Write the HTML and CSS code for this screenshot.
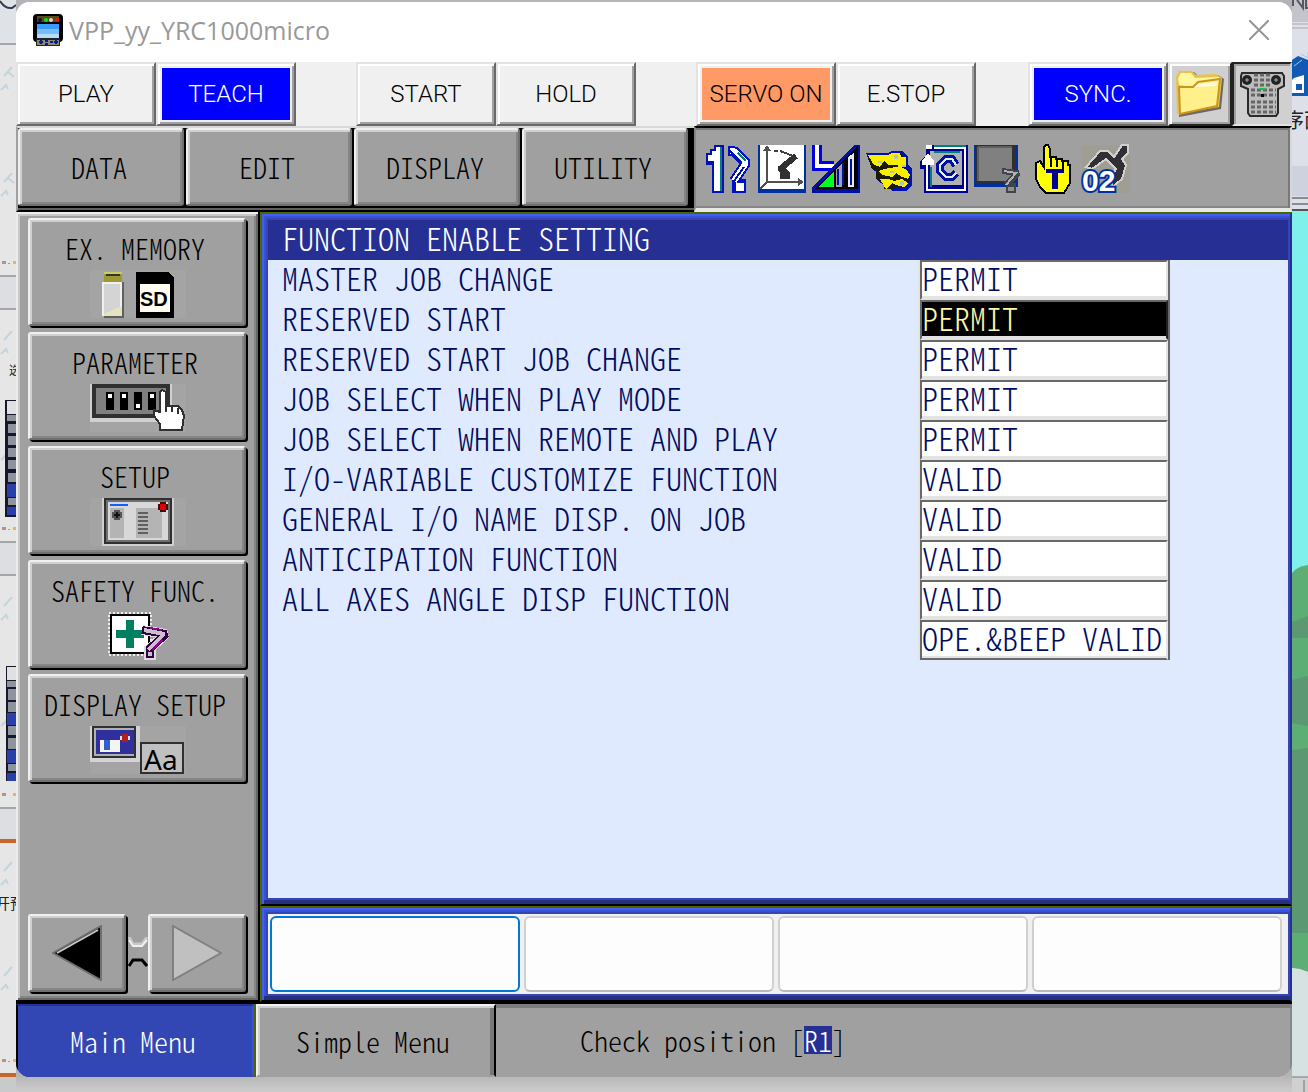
FILE: index.html
```html
<!DOCTYPE html>
<html lang="en">
<head>
    <meta charset="UTF-8">
    <meta name="viewport" content="width=device-width, initial-scale=1.0">
    <title>VPP_yy_YRC1000micro</title>
    <link rel="stylesheet" href="styles.css">
</head>
<body>
    <svg class="desk-left" viewBox="0 0 16 1092" preserveAspectRatio="xMinYMin slice" aria-hidden="true">
        <rect width="16" height="1092" fill="#e6e6e6"/>
        <rect width="16" height="44" fill="#dfe2e6"/>
        <path d="M0 1q5 8 12 7l4-3" fill="none" stroke="#333b50" stroke-width="2"/>
        <path d="M0 44h16M0 276h16M0 309h16M0 542h16M0 575h16M0 808h16" stroke="#a4a6aa" stroke-width="2"/>
        <path d="M0 277h16v31H0zM0 543h16v31H0zM0 809h16v30H0z" fill="#dcdee1"/>
        <g stroke="#c3d4dc" stroke-width="2" fill="none">
            <path d="M1 90l5-5 2 4M4 76l8-9M8 72l6 5M1 196l5-5 2 4M4 182l8-9M8 178l6 5M1 354l5-5 2 4M4 340l8-9M1 460l5-5M1 620l5-5 2 4M4 606l8-9M1 726l5-5M1 885l5-5 2 4M4 871l8-9M1 990l5-5 2 4M4 976l8-9"/>
        </g>
        <g fill="#c08f84">
            <path d="M2 261h4v3H2zM8 263h2v1H8zM2 527h4v3H2zM8 529h2v1H8zM2 793h4v3H2zM2 1059h4v3H2zM8 1061h2v1H8z"/>
        </g>
        <g fill="#f0b060"><path d="M13 261h3v3h-3zM13 527h3v3h-3zM13 793h3v3h-3zM13 1059h3v3h-3z"/></g>
        <text x="9" y="375" class="desk-text small">选</text>
        <text x="-5" y="909" class="desk-text">开预</text>
        <g>
            <path d="M5 400h11v117H5z" fill="#15182c"/>
            <path d="M7 401h9v13H7z" fill="#e0e0e0"/>
            <path d="M7 415h9v6H7zM8 424h8v9H8zM8 436h8v9H8zM8 448h8v9H8zM8 460h8v9H8zM8 473h8v9H8zM8 498h8v7H8z" fill="#8f939c"/>
            <path d="M7 484h9v13H7zM7 507h9v8H7z" fill="#2b3fa8"/>
            <path d="M6 666h10v115H6z" fill="#15182c"/>
            <path d="M7 667h9v13H7z" fill="#e0e0e0"/>
            <path d="M7 681h9v6H7zM8 689h8v11H8zM8 702h8v10H8zM8 726h8v9H8zM8 738h8v11H8zM8 764h8v7H8z" fill="#8f939c"/>
            <path d="M7 713h9v12H7zM7 750h9v13H7zM7 773h9v8H7z" fill="#2b3fa8"/>
        </g>
        <path d="M0 841h16M0 1075h16" stroke="#c8642c" stroke-width="4"/>
        <rect y="1077" width="16" height="15" fill="#c9cacb"/>
    </svg>

    <main class="window">
        <header class="titlebar">
            <svg class="app-icon" viewBox="0 0 30 32" aria-hidden="true">
                <rect width="30" height="28" rx="4" fill="#000"/>
                <path d="M3 24h24v8H3z" fill="#222"/>
                <path d="M4 2h22v6H4z" fill="#5b4a12"/>
                <path d="M4 10h22v14H4z" fill="#3b9cff"/>
                <path d="M4 15h22v9H4z" fill="#78bcff"/>
                <path d="M4 20h22v4H4z" fill="#b4dcff"/>
                <circle cx="7" cy="6" r="2" fill="#101040"/>
                <circle cx="13" cy="6" r="2" fill="#00e020"/>
                <circle cx="18" cy="6" r="2" fill="#d8d8d8"/>
                <circle cx="24" cy="6" r="2" fill="#f01010"/>
                <path d="M4 26h22v5H4z" fill="#8a8a70"/>
                <path d="M6 28h4M8 26v4M12 27h3M12 30h3M17 28h3M21 28h4M23 26v4" stroke="#0a1a9a" stroke-width="2"/>
            </svg>
            <h1>VPP_yy_YRC1000micro</h1>
            <button class="close" aria-label="Close">
                <svg viewBox="0 0 20 20"><path d="M0 0l20 20M20 0L0 20" stroke="#969696" stroke-width="2"/></svg>
            </button>
        </header>

        <div class="status-row">
            <button class="key">PLAY</button>
            <button class="key"><span class="lit blue">TEACH</span></button>
            <button class="key spaced">START</button>
            <button class="key">HOLD</button>
            <button class="key spaced"><span class="lit orange">SERVO ON</span></button>
            <button class="key">E.STOP</button>
            <button class="key pushed"><span class="lit blue">SYNC.</span></button>
            <button class="key tool" aria-label="Open folder">
                <svg viewBox="0 0 50 48">
                    <path d="M4 47L2 8 5 2h14l4 4 20-1 6 4-3 30z" fill="#6e6860"/>
                    <path d="M2 44L1 7 4 1h13l4 4 20-1 6 4-3 29z" fill="#e8c24a"/>
                    <path d="M3 8l3-5h10l4 5 24-1 1 6L18 17 4 15z" fill="#fff6a0"/>
                    <path d="M4 17l14 0 5-5 22-3-3 27L5 44z" fill="#fff08c"/>
                    <path d="M4 17h14l5-5 22-3-3 27L5 44z" fill="none" stroke="#c8961e" stroke-width="2"/>
                    <path d="M20 17l4-3 18-2-1 4z" fill="#fffbdc"/>
                </svg>
            </button>
            <button class="key tool last" aria-label="Pendant">
                <svg viewBox="0 0 46 46">
                    <path d="M3 2h40l2 3v10l-6 3v24l-2 3H11l-2-3V18l-7-3V5z" fill="#bcbcbc" stroke="#2a2a2a" stroke-width="2"/>
                    <circle cx="8" cy="9" r="5" fill="#222"/><circle cx="37" cy="9" r="5" fill="#222"/>
                    <path d="M6 9h4M8 7v4M35 9h4M37 7v4" stroke="#aaa"/>
                    <path d="M15 4h17M15 9h17M15 14h17M12 19h25M12 24h25M12 31h25M12 36h25M12 41h25" stroke="#666" stroke-width="3" stroke-dasharray="4 2"/>
                    <path d="M21 18h6" stroke="#00d030" stroke-width="2"/>
                    <path d="M22 23h3v3h-3z" fill="#000"/>
                </svg>
            </button>
        </div>

        <div class="menu-row">
            <nav class="menus">
                <button class="bevel">DATA</button>
                <button class="bevel">EDIT</button>
                <button class="bevel">DISPLAY</button>
                <button class="bevel">UTILITY</button>
            </nav>
            <div class="state-icons">
                <svg viewBox="0 0 24 24" role="img" aria-label="Robot 1">
                    <path d="M1 4h2V2h2V0h5v24H4V10H1z" fill="#0010b4"/>
                    <path d="M2 5h2V3h2V1h2v22H5V8H2z" fill="#fff"/>
                    <path d="M8 1h1v22H8z" fill="#008080"/>
                    <path d="M12 3h3l6 6-6 9" fill="none" stroke="#0010c8" stroke-width="5" stroke-linejoin="bevel"/>
                    <path d="M14 17h7v7h-7z" fill="#0010c8"/>
                    <path d="M13 3h2l6 6-6 9" fill="none" stroke="#fff" stroke-width="3" stroke-linejoin="bevel"/>
                    <path d="M16 19h4v4h-4z" fill="#fff"/>
                    <path d="M13 3l6 6M20 11l-5 7" stroke="#0010b4"/>
                    <path d="M17 4l4 4" stroke="#008080"/>
                </svg>
                <svg viewBox="0 0 24 24" role="img" aria-label="Cartesian coordinates">
                    <path d="M0 0h24v24H0z" fill="#0030a0"/>
                    <path d="M1 0h22v22H1z" fill="#fff"/>
                    <path d="M4.500 1v17.500H22M4.500 18.500L1 22M3 3l1.500-2L6 3M20 17l2 1.500-2 1.500" fill="none" stroke="#505050"/>
                    <path d="M8 3h2M11 3l8 3" fill="none" stroke="#404040" stroke-width="1"/>
                    <path d="M19 5.500l-8 6.500" stroke="#303030" stroke-width="3"/>
                    <path d="M10 11h3l3 3v3h-5v-3l-1-1z" fill="#303030"/>
                </svg>
                <svg viewBox="0 0 24 24" role="img" aria-label="Manual speed">
                    <path d="M0 0h5v8h6v5H0z" fill="#0000e0"/>
                    <path d="M2.500 0v10.500H11" fill="none" stroke="#fff" stroke-width="2"/>
                    <path d="M0 24v-3L21 0h3v24z" fill="#0010a0"/>
                    <path d="M1 22L23 0v22z" fill="#000"/>
                    <path d="M3 21l8-8v8z" fill="#00ff20"/>
                    <path d="M12 21v-9l3-3v12z" fill="#a0a0a8"/>
                    <path d="M13 20v-8M15.500 20V9" stroke="#0010a0"/>
                    <path d="M18 21V6l3-2v17z" fill="#e8e8f0"/>
                    <path d="M19.500 7v13" stroke="#0010a0"/>
                </svg>
                <svg viewBox="0 0 24 24" role="img" aria-label="Hand step">
                    <path d="M0 4h11l2-1h5l3 3v4l2 2v8l-3 3h-7l-2-2-5-3v-4l-3-2z" fill="#0010b0"/>
                    <path d="M1 6h10l2-2h4l3 3v4l-2 2 4 2v3l-4 3h-4l-1 1h-4v-3l-4-2v-4l-2-1z" fill="#1a1a00"/>
                    <path d="M1 5h10l2-1h4l1 3-2 3h-5l-2-2-2 3-3-1zM6 13l3-1 6-1 5 1 2 3-1 2-3-1-3-2-2 2-5-1zM7 17h4l3 1 4-1 3 2-2 2-4-1-2-1-3 3z" fill="#f8ee00"/>
                    <path d="M14 5h2v2h-2zM18 8h2v3h-2zM12 13h2v1h-2zM17 18h2v2h-2zM6 8h2v1H6z" fill="#b8c0c0"/>
                    <path d="M17 6h3v4h-2v3h-2V9h1z" fill="#f8ee00"/>
                </svg>
                <svg viewBox="0 0 24 24" role="img" aria-label="Cycle">
                    <path d="M3 0h21v24H2V12H0V8l3-3z" fill="#000090"/>
                    <path d="M5 3h16v17H5z" fill="#b0b0b0"/>
                    <path d="M7 1.500h15.500v21h-19V8" fill="none" stroke="#fff" stroke-width="1"/>
                    <path d="M7 .500h16M7 3.500h13M5.500 11v10" fill="none" stroke="#008080"/>
                    <path d="M4 4l3 4v2H1V8z" fill="#fff"/>
                    <path d="M3 0h3v2H3z" fill="#fff"/>
                    <path d="M18 10l-2-3h-3l-3 3v3l3 3h3l2-2" fill="none" stroke="#0010a0" stroke-width="4"/>
                    <path d="M18 10l-2-3h-3l-3 3v3l3 3h3l2-2" fill="none" stroke="#e0f0f0" stroke-width="1"/>
                </svg>
                <svg viewBox="0 0 24 24" role="img" aria-label="Screen off">
                    <path d="M0 0h22v21H0z" fill="#0030a0"/>
                    <path d="M1 0h20v19H1z" fill="#303030"/>
                    <path d="M2 1h17v17H2z" fill="#808080"/>
                    <path d="M2 1h17M2 1v17" fill="none" stroke="#606060"/>
                    <path d="M14 13l8 1-6 6" fill="none" stroke="#404450" stroke-width="3" stroke-linejoin="bevel"/>
                    <path d="M16 19h5v5h-5z" fill="#404450"/>
                    <path d="M15 13l6 1-5 6" fill="none" stroke="#b0b0b0"/>
                    <path d="M17 21h3v2h-3z" fill="#909090"/>
                </svg>
                <svg viewBox="0 0 24 24" role="img" aria-label="Teach mode">
                    <path d="M8 1l1-1h1l1 2v4h3v1h3v1h3v2h1v9l-3 5H9l-3-3-2-4V9l2-1 2 3z" fill="#ffff00" stroke="#000"/>
                    <path d="M11.500 6v5M14.500 7v4M17.500 8v4" stroke="#000"/>
                    <path d="M9 12h9v2h-3v8h-3v-8H9z" fill="#000090"/>
                </svg>
                <svg viewBox="0 0 24 24" role="img" aria-label="Torch 02">
                    <path d="M0 0h24v24H0z" fill="#a09e92"/>
                    <path d="M2 11l7-8h4l3 3 4-6h3v4l-3 3 2 3-2 7-5 4v-6l2-3-5-5-7 5z" fill="#303034" stroke="#d0d0d0"/>
                    <text x="0" y="23" class="torch-no">02</text>
                </svg>
            </div>
        </div>

        <div class="work">
            <aside class="sidebar">
                <button class="bevel item">EX. MEMORY
                    <svg viewBox="0 0 48 24" aria-hidden="true">
                        <path d="M0 0h48v24H0z" fill="#a4a4a4"/>
                        <path d="M7 1h9v5H7zM7 22h9v2H7z" fill="#9a9a30"/>
                        <path d="M7 1h9v1H7z" fill="#cccc60"/><path d="M8 2h7v1H8z" fill="#333"/>
                        <path d="M7 6h10v18H7z" fill="#606060"/>
                        <path d="M6 6h10v17H6z" fill="#f0f0f0"/><path d="M7 7h8v15H7z" fill="#d4d4d4"/>
                        <path d="M7 22l9-4v5H7z" fill="#e4e4c0"/>
                        <path d="M23 1h16l3 3v20H23z" fill="#000"/>
                        <path d="M25 7h15v14H25z" fill="#fffcf0"/>
                        <text x="25" y="18" class="sd">SD</text>
                    </svg>
                </button>
                <button class="bevel item">PARAMETER
                    <svg viewBox="0 0 48 24" aria-hidden="true">
                        <path d="M0 0h48v24H0z" fill="#a4a4a4"/>
                        <path d="M0 0h41v19H0z" fill="#d0d0d0"/>
                        <path d="M1 0h39v17H1z" fill="#303030"/><path d="M3 2h35v13H3z" fill="#808080"/>
                        <path d="M8 4h4v9H8zM15 4h4v9h-4zM22 4h4v9h-4zM29 4h4v9h-4z" fill="#000"/>
                        <path d="M9 5h2v2H9zM16 5h2v2h-2zM23 10h2v2h-2zM30 5h2v2h-2z" fill="#fff"/>
                        <path d="M35 4l1-1 2 1v7h6l2 2 1 3-1 7H35v-3l-3-4v-3l3 1z" fill="#fff" stroke="#303030"/>
                        <path d="M38 9v5M41 11v3M44 12v3" stroke="#303030"/>
                    </svg>
                </button>
                <button class="bevel item">SETUP
                    <svg viewBox="0 0 48 24" aria-hidden="true">
                        <path d="M0 0h48v24H0z" fill="#a4a4a4"/>
                        <path d="M6 0h36v24H6z" fill="#d0d0d0"/>
                        <path d="M7 0h34v23H7z" fill="#303030"/><path d="M8 1h32v21H8z" fill="#707070"/><path d="M9 2h30v19H9z" fill="#d8d8d8"/>
                        <path d="M10 5h7v15h-7zM23 5h13v15H23z" fill="#b4b4b4"/>
                        <path d="M10 3h9v1h-9z" fill="#1060ff"/>
                        <path d="M12 6h3v1h1v3h-1v1h-3v-1h-1V7h1z" fill="#555"/><path d="M12 8h3v1h-3zM13 7h1v3h-1z" fill="#111"/>
                        <path d="M24 7.500h5M24 9.500h5M24 11.500h5M24 13.500h5M24 15.500h5M24 17.500h5" stroke="#606060"/>
                        <path d="M35 2h3v1h1v3h-1v1h-3V6h-1V3h1z" fill="#401010"/><path d="M35 3h3v3h-3z" fill="#e00000"/>
                    </svg>
                </button>
                <button class="bevel item">SAFETY FUNC.
                    <svg viewBox="0 0 48 24" aria-hidden="true">
                        <path d="M9.500.5h21v21h-21z" fill="none" stroke="#eee" stroke-dasharray="1 1"/>
                        <path d="M10.500 1.500h19v19h-19z" fill="#fff" stroke="#000"/>
                        <path d="M18 4h4v5h5v4h-5v5h-4v-5h-5V9h5z" fill="#008060"/>
                        <path d="M26 9l12 2-9 8" fill="none" stroke="#ddd" stroke-width="5" stroke-linejoin="bevel"/>
                        <path d="M27 17h6v7h-6z" fill="#ddd"/>
                        <path d="M26 9l12 2-9 8" fill="none" stroke="#300040" stroke-width="4" stroke-linejoin="bevel"/>
                        <path d="M28 18h4v5h-4z" fill="#300040"/>
                        <path d="M27 9l10 2-8 8" fill="none" stroke="#c8c0cc" stroke-width="2" stroke-linejoin="bevel"/>
                        <path d="M29 20h2v2h-2z" fill="#c8c0cc"/>
                        <path d="M30 8l6 1M36 14l-5 5" stroke="#900090"/>
                    </svg>
                </button>
                <button class="bevel item">DISPLAY SETUP
                    <svg viewBox="0 0 48 24" aria-hidden="true">
                        <path d="M0 0h48v24H0z" fill="#a4a4a4"/>
                        <path d="M0 0h25v18H0z" fill="#d4d4d4"/>
                        <path d="M1 0h22v16H1z" fill="#303030"/><path d="M2 1h20v14H2z" fill="#b0b0b0"/><path d="M3 2h19v12H3z" fill="#30309c"/>
                        <path d="M5 7h10v6H5z" fill="#f4f4f4"/><path d="M7 7h3v5H7z" fill="#3060c8"/>
                        <path d="M15 5h5v2h-5z" fill="#ddd"/><path d="M16 4h3v4h-3z" fill="#b02020"/>
                        <path d="M25.500 8.500h21v15h-21z" fill="#c0c0c0" stroke="#303030"/>
                        <text x="27" y="22" class="aa">Aa</text>
                    </svg>
                </button>
                <div class="pager">
                    <button class="bevel" aria-label="Previous">
                        <svg viewBox="0 0 50 56"><path d="M1 28L49 1v54z" fill="#000" stroke="#707070" stroke-width="2"/><path d="M5 28L46 5" stroke="#c8c8c8" stroke-width="2"/></svg>
                    </button>
                    <svg class="link" viewBox="0 0 20 32" aria-hidden="true">
                        <path d="M2 0l4 7h9l5-7" fill="none" stroke="#c8c8c8" stroke-width="3"/>
                        <path d="M2 3l4 6h9l5-6" fill="none" stroke="#f0f0f0" stroke-width="2"/>
                        <path d="M2 29l4-6h9l5 6" fill="none" stroke="#000" stroke-width="3"/>
                    </svg>
                    <button class="bevel" aria-label="Next">
                        <svg viewBox="0 0 50 56"><path d="M49 28L1 1v54z" fill="#c0c0c0" stroke="#808080" stroke-width="2"/></svg>
                    </button>
                </div>
            </aside>

            <div class="content">
                <section class="panel settings">
                    <h2>FUNCTION ENABLE SETTING</h2>
                    <table>
                        <tbody>
                            <tr><th scope="row">MASTER JOB CHANGE</th><td>PERMIT</td></tr>
                            <tr class="selected"><th scope="row">RESERVED START</th><td>PERMIT</td></tr>
                            <tr><th scope="row">RESERVED START JOB CHANGE</th><td>PERMIT</td></tr>
                            <tr><th scope="row">JOB SELECT WHEN PLAY MODE</th><td>PERMIT</td></tr>
                            <tr><th scope="row">JOB SELECT WHEN REMOTE AND PLAY</th><td>PERMIT</td></tr>
                            <tr><th scope="row">I/O-VARIABLE CUSTOMIZE FUNCTION</th><td>VALID</td></tr>
                            <tr><th scope="row">GENERAL I/O NAME DISP. ON JOB</th><td>VALID</td></tr>
                            <tr><th scope="row">ANTICIPATION FUNCTION</th><td>VALID</td></tr>
                            <tr><th scope="row">ALL AXES ANGLE DISP FUNCTION</th><td>VALID</td></tr>
                            <tr><th></th><td>OPE.&amp;BEEP VALID</td></tr>
                        </tbody>
                    </table>
                </section>
                <section class="panel">
                    <div class="softkeys">
                        <button class="focus" aria-label="Soft key 1"></button>
                        <button aria-label="Soft key 2"></button>
                        <button aria-label="Soft key 3"></button>
                        <button aria-label="Soft key 4"></button>
                    </div>
                </section>
            </div>
        </div>

        <footer class="bottom">
            <button class="main-menu">Main Menu</button>
            <button class="simple-menu">Simple Menu</button>
            <p class="message">Check position [<mark>R1</mark>]</p>
        </footer>
    </main>

    <svg class="desk-right" viewBox="0 0 16 1092" preserveAspectRatio="xMinYMin slice" aria-hidden="true">
        <rect width="16" height="1092" fill="#dde0e8"/>
        <rect width="16" height="22" fill="#c4c5ca"/>
        <path d="M1 0v6M5 0l6 8V0M14 0v8h2" fill="none" stroke="#5a5562" stroke-width="2"/>
        <path d="M0 24h16M0 28h16" stroke="#a8a8ac"/>
        <path d="M0 60l6-4 10 4v12L0 76z" fill="#1059b4"/>
        <path d="M2 66l8-6M9 54l7 4v-6" fill="none" stroke="#a8c4e8"/>
        <path d="M0 72h16v24H0z" fill="#1059b4"/><path d="M2 78l10-3v18H0V80z" fill="#fff"/><path d="M4 84h6v6H4z" fill="#1059b4"/>
        <text x="-8" y="128" class="desk-text large">序面</text>
        <rect y="166" width="16" height="30" fill="#ced2de"/>
        <path d="M0 198h16M0 204h16" stroke="#8c8c90" stroke-width="2"/>
        <path d="M0 210h16" stroke="#555" stroke-width="2"/>
        <rect y="211" width="16" height="362" fill="#80f0ec"/>
        <path d="M0 573q4-6 16-8v407l-16-4z" fill="#5cae74"/>
        <path d="M0 622l16-6v22l-16 0zM0 680l16-4v50l-16-3zM0 750l16-2v185l-16 0z" fill="#5c9872"/>
        <path d="M0 968l8 1 8 3v110H0z" fill="#d6e2e2"/>
        <rect y="1077" width="16" height="15" fill="#d0d0d0"/>
        <path d="M12 1080v12M0 1077h16" fill="none" stroke="#777"/>
    </svg>
    <div class="desk-bottom"></div>
</body>
</html>
```
FILE: styles.css
```css
* {
    box-sizing: border-box;
}
body {
    margin: 0;
    min-height: 100vh;
    display: grid;
    grid-template-columns: 16px 1fr 16px;
    grid-template-rows: 2px 1fr 15px;
    background: #b4b4b8;
    font-family: "Noto Sans CJK JP", "Liberation Mono", monospace;
    font-feature-settings: "hwid";
    font-weight: 300;
    font-size: 28px;
    line-height: 32px;
    color: #000;
}
svg {
    display: block;
    flex: none;
}
button {
    margin: 0;
    padding: 0;
    border: 0;
    font: inherit;
    font-feature-settings: inherit;
    color: inherit;
    cursor: pointer;
}
h1, h2, p {
    margin: 0;
    font-weight: inherit;
}

/* desktop behind the window */
.desk-left, .desk-right {
    grid-row: 1 / 4;
    grid-column: 1;
    width: 16px;
    height: 100%;
}
.desk-right {
    grid-column: 3;
}
.desk-bottom {
    grid-row: 3;
    grid-column: 2;
    background: linear-gradient(#b8b8b8, #cccccc);
}
.desk-text {
    font-size: 15px;
    font-weight: 400;
    fill: #222;
}
.desk-text.small {
    font-size: 12px;
}
.desk-text.large {
    font-size: 20px;
}

.window {
    grid-row: 2;
    grid-column: 2;
    display: flex;
    flex-direction: column;
    overflow: hidden;
    border-radius: 14px;
    background: #f0f0f0;
}
.titlebar {
    height: 60px;
    padding: 0 23px 4px 17px;
    display: flex;
    align-items: center;
    gap: 6px;
    background: #fff;
}
.app-icon {
    width: 30px;
    height: 32px;
}
.titlebar h1 {
    flex: 1;
    font-family: "Open Sans", "Noto Sans", sans-serif;
    font-feature-settings: normal;
    font-size: 25px;
    font-weight: 400;
    color: #999;
}
.close {
    background: none;
}
.close svg {
    width: 20px;
    height: 20px;
}

/* pendant mode keys */
.status-row {
    display: flex;
    height: 64px;
    font-family: Roboto, "Liberation Sans", sans-serif;
    font-feature-settings: normal;
    font-size: 24px;
}
.key {
    width: 140px;
    padding: 2px;
    background: #f0f0f0;
    border: 2px solid;
    border-color: #e3e3e3 #696969 #696969 #e3e3e3;
    box-shadow: inset 2px 2px #fff, inset -2px -2px #a0a0a0;
}
.key.spaced {
    margin-left: 60px;
}
.key.pushed {
    margin-left: auto;
}
.lit {
    display: flex;
    align-items: center;
    justify-content: center;
    height: 52px;
    margin: 0 2px;
}
.lit.blue {
    background: #0000ff;
    color: #fff;
}
.lit.orange {
    background: #ff9966;
}
.key.tool {
    width: 64px;
    display: flex;
    align-items: center;
    justify-content: center;
    background: #d0d0d0;
    border-color: #e3e3e3 #222 #222 #e3e3e3;
}
.key.tool svg {
    width: 50px;
    height: 48px;
}
.key.tool.last {
    width: 60px;
    border-color: #222 #d0d0d0 #e3e3e3 #222;
    box-shadow: inset 2px 2px #a0a0a0;
}
.key.tool.last svg {
    width: 46px;
    height: 46px;
}

/* raised grey buttons */
.bevel {
    background: #a0a0a0;
    border: 2px solid;
    border-color: #f0f0f0 #707070 #707070 #f0f0f0;
    border-radius: 3px;
    box-shadow: inset 2px 2px #d0d0d0, inset -2px -2px #868686, 2px 2px #000;
}
.menu-row {
    display: flex;
    height: 86px;
}
.menus {
    display: flex;
    gap: 2px;
    padding: 0 6px 2px 0;
    background: #000;
    border-top: 2px solid #d8d8d8;
    border-left: 2px solid #a0a0a0;
    border-bottom: 2px solid #000;
    box-shadow: inset 0 -2px #606060;
}
.menus .bevel {
    width: 166px;
    height: 78px;
    padding-right: 4px;
}
.state-icons {
    flex: 1;
    display: flex;
    align-items: center;
    gap: 6px;
    padding: 2px 8px 0;
    background: #a0a0a0;
    border: 2px solid;
    border-color: #000 #d8d8d8 #e8e8e8 #868686;
    border-bottom-width: 4px;
    box-shadow: inset -2px 2px #787878, inset 0 -2px #868686;
}
.state-icons svg {
    width: 48px;
    height: 48px;
    overflow: visible;
    shape-rendering: crispEdges;
}
.torch-no {
    font: bold 15px "Liberation Sans", sans-serif;
    font-feature-settings: normal;
    fill: #fff;
    stroke: #0030a0;
    stroke-width: 2px;
    paint-order: stroke;
}

.work {
    flex: 1;
    display: flex;
}
.sidebar {
    width: 244px;
    flex: none;
    display: flex;
    flex-direction: column;
    gap: 6px;
    padding: 6px 12px 8px;
    background: #a0a0a0;
    border-right: 2px solid #000;
    border-bottom: 2px solid #000;
    box-shadow: inset 2px 2px #ececec, inset -2px -2px #686868, inset 4px 4px #c8c8c8, inset -4px -4px #868686;
}
.item {
    height: 108px;
    display: flex;
    flex-direction: column;
    align-items: center;
    gap: 6px;
    padding: 12px 4px 0 0;
}
.item svg {
    width: 96px;
    height: 48px;
    margin-left: 6px;
    overflow: visible;
    shape-rendering: crispEdges;
}
.sd {
    font: bold 10px "Liberation Sans", sans-serif;
    font-feature-settings: normal;
}
.aa {
    font: 14px "Noto Sans", sans-serif;
    font-feature-settings: normal;
}
.pager {
    margin-top: auto;
    display: flex;
    align-items: center;
}
.pager .bevel {
    flex: 1;
    height: 78px;
    display: flex;
    align-items: center;
    justify-content: center;
}
.pager .bevel svg {
    width: 50px;
    height: 56px;
}
.pager .link {
    width: 22px;
    height: 32px;
}

/* blue framed panels */
.content {
    flex: 1;
    min-width: 0;
    display: flex;
    flex-direction: column;
}
.panel {
    padding: 6px 2px 6px 6px;
    background: #3346b4;
    border: 2px solid;
    border-color: #4b6600 #263094 #000 #4b6600;
    box-shadow: inset 2px 2px #4060f4, inset 0 -4px #263080, inset 4px 4px #3a50d8;
}
.settings {
    flex: 1;
    display: flex;
    flex-direction: column;
    color: #000c60;
    font-size: 32px;
    line-height: 30px;
}
.settings h2 {
    height: 40px;
    padding: 2px 14px;
    background: #263094;
    color: #fff;
    font-size: 32px;
}
.settings table {
    flex: 1;
    display: block;
    background: #dfeaff;
    border-spacing: 0;
}
.settings th {
    width: 652px;
    height: 40px;
    padding: 2px 14px;
    text-align: left;
    vertical-align: top;
    font-weight: inherit;
}
.settings td {
    width: 248px;
    padding: 0;
    vertical-align: top;
    background: #fff;
    border: 2px solid;
    border-color: #696969 #e3e3e3 #e3e3e3 #696969;
    box-shadow: 2px 0 #696969, -2px 0 #e3e3e3, inset 0 -2px #e3e3e3;
    white-space: nowrap;
}
.settings .selected td {
    background: #000;
    border-right-color: #222;
    color: #fff8a8;
}
.settings tr:last-child td {
    border-bottom-color: #696969;
}
.softkeys {
    height: 80px;
    display: flex;
    gap: 4px;
    padding: 2px 6px 2px 2px;
    background: #f0f0f0;
}
.softkeys button {
    flex: 1;
    background: #fdfdfd;
    border: 2px solid #d0d0d0;
    border-bottom-color: #bababa;
    border-radius: 6px;
}
.softkeys .focus {
    border-color: #0078d4;
}

.bottom {
    height: 75px;
    display: flex;
    background: #a0a0a0;
    border-top: 2px solid #000;
}
.main-menu {
    width: 238px;
    padding-right: 4px;
    background: #3246b4;
    color: #fff;
    border: 2px solid;
    border-color: #263094 #3a50d8 #3246b4 #000;
    box-shadow: 2px 0 #4b6600;
}
.simple-menu {
    width: 240px;
    margin-left: 2px;
    padding-right: 6px;
    background: #a0a0a0;
    border: 2px solid;
    border-color: #f0f0f0 #000 #a0a0a0 #f0f0f0;
    box-shadow: inset 2px 2px #d0d0d0, inset -4px 0 #787878;
}
.message {
    flex: 1;
    padding: 20px 84px;
    box-shadow: inset 0 4px #7c7c7c, inset -2px 0 #868686;
}
.message mark {
    display: inline-block;
    line-height: 28px;
    background: #263094;
    color: #fff;
}
```
